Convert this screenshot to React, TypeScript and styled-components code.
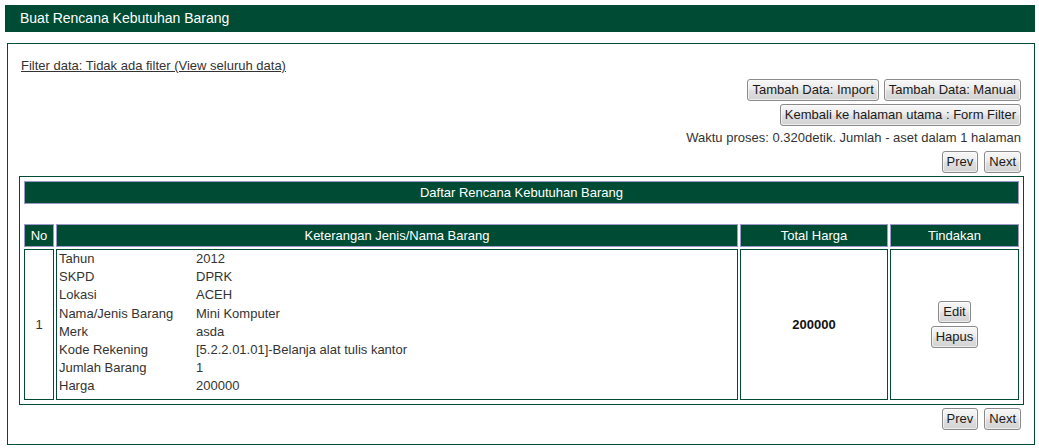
import { Fragment } from 'react'
import styled, { createGlobalStyle } from 'styled-components'

const Green = '#004b33'
const Lavender = '#9d99cb'
const TextColor = '#333333'

const GlobalStyle = createGlobalStyle`
    html, body {
        margin: 0;
        padding: 0;
        background: #ffffff;
    }
    body {
        font-family: "Liberation Sans", Arial, sans-serif;
        font-size: 13px;
        color: ${TextColor};
    }
    * {
        box-sizing: border-box;
    }
`

const PageDiv = styled.div`
    padding: 5px 4px 0 5px;
`

const TitleBarDiv = styled.div`
    height: 27px;
    background: ${Green};
    color: #ffffff;
    font-size: 14px;
    line-height: 27px;
    padding-left: 15px;
`

const ContentBoxDiv = styled.div`
    margin: 11px 0 0 2px;
    border: 1px solid ${Green};
    padding: 14px 0 14px;
`

const FilterLink = styled.a`
    display: block;
    margin-left: 13px;
    line-height: 15px;
    color: ${TextColor};
    text-decoration: underline;
`

const ActionRowDiv = styled.div<{ $top: number; $gap?: number }>`
    display: flex;
    justify-content: flex-end;
    gap: ${(p) => p.$gap ?? 5}px;
    margin-top: ${(p) => p.$top}px;
    padding-right: 13px;
`

const Button = styled.button`
    height: 22px;
    padding: 0 4px;
    border: 1px solid #8a8a8a;
    border-radius: 3px;
    background: linear-gradient(to bottom, #f7f7f7 0%, #ececec 45%, #dedede 55%, #d3d3d3 100%);
    box-shadow: inset 0 0 0 1px rgba(255, 255, 255, 0.6);
    font-family: "Liberation Sans", Arial, sans-serif;
    font-size: 13px;
    color: #1a1a1a;
    line-height: 18px;
    cursor: pointer;
`

const InfoText = styled.div`
    margin-top: 4px;
    padding-right: 13px;
    text-align: right;
    line-height: 15px;
`

const TablePanelDiv = styled.div`
    margin: 3px 10px 0 11px;
    border: 1px solid ${Green};
    padding: 2px;
`

const DataTable = styled.table`
    width: 100%;
    table-layout: fixed;
    border-collapse: separate;
    border-spacing: 2px;
`

const Column = styled.col<{ $width?: number }>`
    ${(p) => (p.$width ? `width: ${p.$width}px;` : '')}
`

const CaptionCell = styled.th`
    background: ${Green};
    border: 1px solid ${Lavender};
    color: #ffffff;
    font-weight: normal;
    line-height: 15px;
    padding: 3px 2px;
    text-align: center;
`

const SpacerCell = styled.td`
    height: 16px;
    padding: 0;
`

const HeadCell = styled.th`
    background: ${Green};
    border: 1px solid ${Lavender};
    color: #ffffff;
    font-weight: normal;
    line-height: 15px;
    padding: 3px 2px;
    text-align: center;
`

const BodyCell = styled.td<{ $bold?: boolean }>`
    border: 1px solid ${Green};
    padding: 0 2px;
    text-align: center;
    vertical-align: middle;
    font-weight: ${(p) => (p.$bold ? 'bold' : 'normal')};
    color: ${(p) => (p.$bold ? '#111111' : TextColor)};
`

const DetailCell = styled.td`
    border: 1px solid ${Green};
    padding: 0 2px 3.4px;
    vertical-align: top;
`

const DetailGrid = styled.div`
    display: grid;
    grid-template-columns: 137px 1fr;
    grid-auto-rows: 18.2px;
    line-height: 18px;
`

const ActionStack = styled.div`
    display: flex;
    flex-direction: column;
    align-items: center;
    gap: 3px;
`

const details: [string, string][] = [
    ['Tahun', '2012'],
    ['SKPD', 'DPRK'],
    ['Lokasi', 'ACEH'],
    ['Nama/Jenis Barang', 'Mini Komputer'],
    ['Merk', 'asda'],
    ['Kode Rekening', '[5.2.2.01.01]-Belanja alat tulis kantor'],
    ['Jumlah Barang', '1'],
    ['Harga', '200000'],
]

const Pager = ({ top }: { top: number }) => (
    <ActionRowDiv $top={top} $gap={6}>
        <Button>Prev</Button>
        <Button>Next</Button>
    </ActionRowDiv>
)

export default function App() {
    return (
        <PageDiv>
            <GlobalStyle />
            <TitleBarDiv>Buat Rencana Kebutuhan Barang</TitleBarDiv>
            <ContentBoxDiv>
                <FilterLink href="#">Filter data: Tidak ada filter (View seluruh data)</FilterLink>
                <ActionRowDiv $top={6}>
                    <Button>Tambah Data: Import</Button>
                    <Button>Tambah Data: Manual</Button>
                </ActionRowDiv>
                <ActionRowDiv $top={3}>
                    <Button>Kembali ke halaman utama : Form Filter</Button>
                </ActionRowDiv>
                <InfoText>Waktu proses: 0.320detik. Jumlah - aset dalam 1 halaman</InfoText>
                <Pager top={6} />
                <TablePanelDiv>
                    <DataTable>
                        <colgroup>
                            <Column $width={30} />
                            <Column />
                            <Column $width={148} />
                            <Column $width={129} />
                        </colgroup>
                        <thead>
                            <tr>
                                <CaptionCell colSpan={4}>Daftar Rencana Kebutuhan Barang</CaptionCell>
                            </tr>
                            <tr>
                                <SpacerCell colSpan={4} />
                            </tr>
                            <tr>
                                <HeadCell>No</HeadCell>
                                <HeadCell>Keterangan Jenis/Nama Barang</HeadCell>
                                <HeadCell>Total Harga</HeadCell>
                                <HeadCell>Tindakan</HeadCell>
                            </tr>
                        </thead>
                        <tbody>
                            <tr>
                                <BodyCell>1</BodyCell>
                                <DetailCell>
                                    <DetailGrid>
                                        {details.map(([label, value]) => (
                                            <Fragment key={label}>
                                                <span>{label}</span>
                                                <span>{value}</span>
                                            </Fragment>
                                        ))}
                                    </DetailGrid>
                                </DetailCell>
                                <BodyCell $bold>200000</BodyCell>
                                <BodyCell>
                                    <ActionStack>
                                        <Button>Edit</Button>
                                        <Button>Hapus</Button>
                                    </ActionStack>
                                </BodyCell>
                            </tr>
                        </tbody>
                    </DataTable>
                </TablePanelDiv>
                <Pager top={3} />
            </ContentBoxDiv>
        </PageDiv>
    )
}
